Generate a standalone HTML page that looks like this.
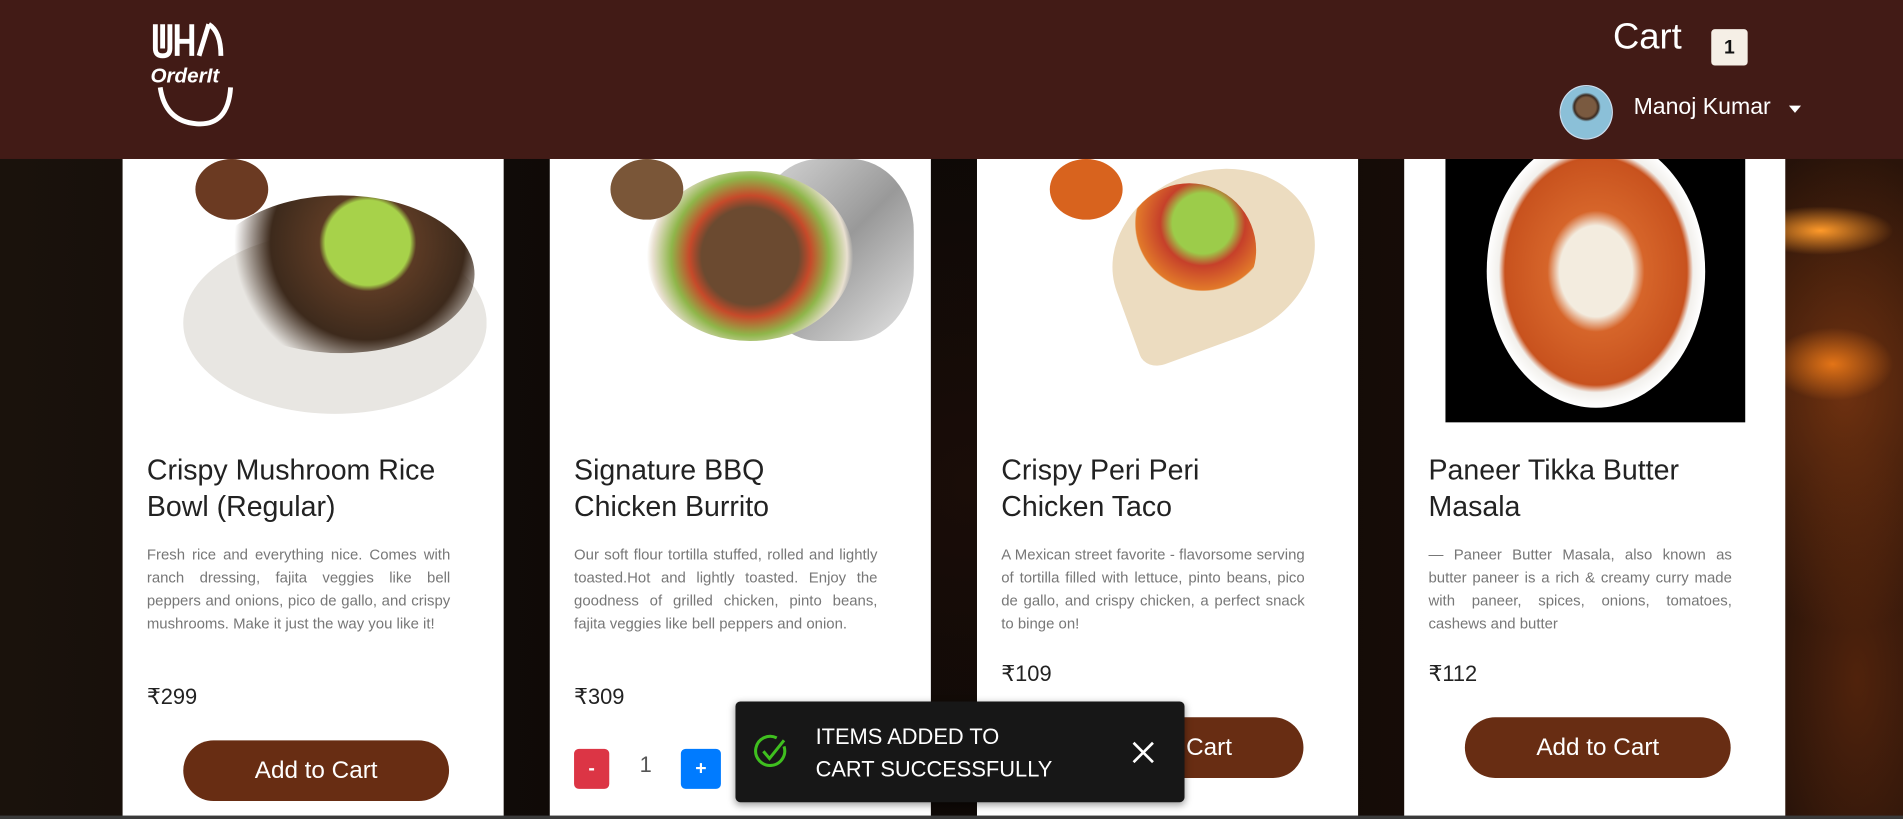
<!DOCTYPE html>
<html><head><meta charset="utf-8"><style>
html,body{margin:0;padding:0;width:1903px;height:819px;overflow:hidden;background:#0d0806;}
#w{position:absolute;left:0;top:0;width:1568px;height:675px;transform:scale(1.21365);transform-origin:0 0;overflow:hidden;
background:radial-gradient(ellipse 60px 20px at 1500px 190px,#ff9a2a,transparent),radial-gradient(ellipse 50px 30px at 1510px 300px,#e37417,transparent),radial-gradient(ellipse 120px 200px at 1520px 320px,rgba(160,70,20,.6),transparent),radial-gradient(ellipse 80px 200px at 1530px 560px,rgba(120,50,15,.5),transparent),radial-gradient(ellipse 300px 300px at 800px 400px,#1a0d08,transparent),linear-gradient(90deg,#1a120c,#0f0a07 30%,#0c0806 60%,#2a140a);font-family:"Liberation Sans",sans-serif;}
.hd{position:absolute;left:0;top:0;width:1568px;height:131px;background:#421b16;z-index:5}
.card{position:absolute;top:0;width:314px;height:675px;background:#fff}
.img{position:absolute;left:20px;width:280px;top:131px;height:217px;overflow:hidden}
.t{position:absolute;left:20px;top:372px;width:240px;font-size:23.5px;line-height:30px;color:#222}
.d{position:absolute;left:20px;top:448px;width:250px;font-size:12.3px;line-height:19px;color:#777;text-align:justify}
.p{position:absolute;left:20px;font-size:18px;color:#222}
.b{position:absolute;left:50px;width:219px;height:50px;border-radius:25px;background:#682d13;color:#fff;font-size:20px;text-align:center;line-height:50px}
</style></head><body><div id="w">
<div class="card" style="left:101px">
 <div class="img"><div style="position:absolute;left:30px;top:60px;width:250px;height:150px;border-radius:50%;background:#e8e6e2"></div><div style="position:absolute;left:50px;top:30px;width:220px;height:130px;border-radius:50%;background:radial-gradient(circle at 60% 30%,#a7d24a 0 35px,#5b3a24 40px,#3d2a1c 80px,transparent 110px)"></div><div style="position:absolute;left:40px;top:0;width:60px;height:50px;border-radius:50%;background:#6b3a22"></div></div>
 <div class="t">Crispy Mushroom Rice Bowl (Regular)</div>
 <div class="d">Fresh rice and everything nice. Comes with ranch dressing, fajita veggies like bell peppers and onions, pico de gallo, and crispy mushrooms. Make it just the way you like it!</div>
 <div class="p" style="top:564px">₹299</div>
 <div class="b" style="top:610px">Add to Cart</div>
</div>
<div class="card" style="left:453px">
 <div class="img"><div style="position:absolute;left:150px;top:0;width:130px;height:150px;border-radius:40%;background:linear-gradient(135deg,#d8d8d8,#999,#e5e5e5)"></div><div style="position:absolute;left:60px;top:10px;width:170px;height:140px;border-radius:50%;background:radial-gradient(circle,#6b4a30 0 40px,#c64a2a 50px,#8fb64a 65px,#e9e0d0 80px,transparent 85px)"></div><div style="position:absolute;left:30px;top:0;width:60px;height:50px;border-radius:50%;background:#7a5638"></div></div>
 <div class="t">Signature BBQ Chicken Burrito</div>
 <div class="d">Our soft flour tortilla stuffed, rolled and lightly toasted.Hot and lightly toasted. Enjoy the goodness of grilled chicken, pinto beans, fajita veggies like bell peppers and onion.</div>
 <div class="p" style="top:564px">₹309</div>
 <div style="position:absolute;left:20px;top:617px;width:29px;height:33px;border-radius:4px;background:#dc3545;color:#fff;text-align:center;line-height:33px;font-weight:bold">-</div>
 <div style="position:absolute;left:74px;top:620px;font-size:18px;color:#555">1</div>
 <div style="position:absolute;left:108px;top:617px;width:33px;height:33px;border-radius:4px;background:#007bff;color:#fff;text-align:center;line-height:33px;font-weight:bold">+</div>
</div>
<div class="card" style="left:805px">
 <div class="img"><div style="position:absolute;left:90px;top:10px;width:170px;height:140px;border-radius:50% 50% 50% 10%;background:#ecdcc0;transform:rotate(-20deg)"></div><div style="position:absolute;left:100px;top:20px;width:110px;height:110px;border-radius:50%;background:radial-gradient(circle at 60% 30%,#9ccc4a 0 25px,#c6402a 35px,#e27a2a 55px,transparent 56px)"></div><div style="position:absolute;left:40px;top:0;width:60px;height:50px;border-radius:50%;background:#d8631e"></div></div>
 <div class="t">Crispy Peri Peri Chicken Taco</div>
 <div class="d">A Mexican street favorite - flavorsome serving of tortilla filled with lettuce, pinto beans, pico de gallo, and crispy chicken, a perfect snack to binge on!</div>
 <div class="p" style="top:545px">₹109</div>
 <div class="b" style="top:591px">Add to Cart</div>
</div>
<div class="card" style="left:1157px">
 <div class="img" style="left:34px;width:247px;background:#000"><div style="position:absolute;left:34px;top:-20px;width:180px;height:225px;border-radius:50%;background:radial-gradient(ellipse,#f3ecdf 0 30px,#d6652a 40px,#c8521e 75px,#f2f0ec 80px,#fff 90px)"></div></div>
 <div class="t">Paneer Tikka Butter Masala</div>
 <div class="d">— Paneer Butter Masala, also known as butter paneer is a rich &amp; creamy curry made with paneer, spices, onions, tomatoes, cashews and butter</div>
 <div class="p" style="top:545px">₹112</div>
 <div class="b" style="top:591px">Add to Cart</div>
</div>
<div class="hd">
 <div style="position:absolute;left:122px;top:18px;width:78px;height:88px;color:#fff">
  <svg width="78" height="88" viewBox="0 0 78 88" fill="none" stroke="#fff" stroke-width="4"><path d="M6 2v20q0 6 6 6t6-6V2M12 2v20M24 2v26M24 16h12M36 2v26M50 2l-8 26M50 2q10 6 10 26M10 54q4 28 30 30t28-30"/><text x="2" y="50" fill="#fff" stroke="none" font-size="17" font-weight="bold" font-style="italic" font-family="Liberation Sans">OrderIt</text></svg>
 </div>
 <div style="position:absolute;left:1329px;top:14px;font-size:30px;color:#fff">Cart</div>
 <div style="position:absolute;left:1410px;top:24px;width:30px;height:30px;border-radius:3px;background:#f5efe6;color:#111;font-size:16px;font-weight:bold;text-align:center;line-height:31px">1</div>
 <div style="position:absolute;left:1285px;top:70px;width:42px;height:43px;border-radius:50%;background:radial-gradient(circle at 50% 40%,#7a5a40 0 8px,#3a2a20 10px,#8bc0d8 12px);border:1px solid #cde"></div>
 <div style="position:absolute;left:1346px;top:78px;font-size:19px;color:#fff">Manoj Kumar</div>
 <div style="position:absolute;left:1474px;top:87px;width:0;height:0;border-left:5px solid transparent;border-right:5px solid transparent;border-top:6px solid #fff"></div>
</div>
<div style="position:absolute;left:606px;top:578px;width:370px;height:83px;background:#171717;border-radius:4px;z-index:6;color:#fff;box-shadow:0 2px 6px rgba(0,0,0,.4)">
 <svg style="position:absolute;left:14px;top:26px" width="30" height="30" viewBox="0 0 30 30" fill="none" stroke="#3fbf1f" stroke-width="2.5"><path d="M26 11A12 12 0 1 1 20 4"/><path d="M9 15l5 6 12-15"/></svg>
 <div style="position:absolute;left:66px;top:16px;font-size:18px;line-height:27px">ITEMS ADDED TO<br>CART SUCCESSFULLY</div>
 <svg style="position:absolute;left:327px;top:33px" width="18" height="18" viewBox="0 0 18 18" stroke="#fff" stroke-width="2.2"><path d="M1 1l16 16M17 1L1 17"/></svg>
</div>
<div style="position:absolute;left:0;top:672px;width:1568px;height:3px;background:#3a3a3a;z-index:7"></div>
</div></body></html>
